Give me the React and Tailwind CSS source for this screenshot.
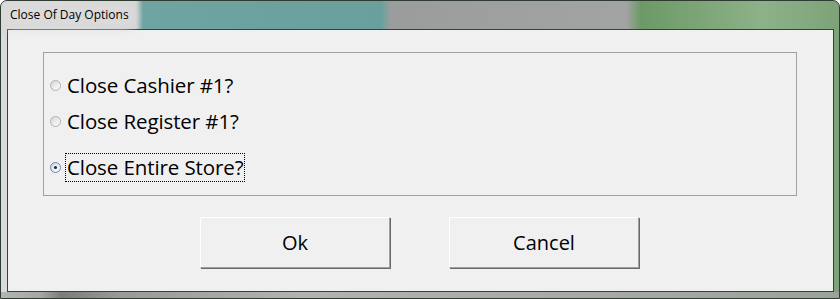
import React, { useState } from 'react';

const options = [
  { id: 'cashier', label: 'Close Cashier #1?' },
  { id: 'register', label: 'Close Register #1?' },
  { id: 'store', label: 'Close Entire Store?' },
];

function Radio({ checked }) {
  return (
    <span
      className={
        'flex h-[11px] w-[11px] shrink-0 items-center justify-center rounded-full border bg-[linear-gradient(135deg,#d6d6d6,#ffffff)] ' +
        (checked ? 'border-[#5f88b5]' : 'border-[#b0b0b0]')
      }
    >
      {checked && <span className="h-[3px] w-[3px] rounded-full bg-[#1a2a40]" />}
    </span>
  );
}

export default function App() {
  const [selected, setSelected] = useState('store');

  return (
    <div className="relative h-[299px] w-[840px] overflow-hidden rounded-t-[7px] border border-[#2f3a30] bg-[linear-gradient(90deg,#dadada_0px,#d4d4d4_135px,#6ea4a1_142px,#69a09d_380px,#9b9d9d_390px,#a2a4a4_625px,#6c9a66_640px,#8db189_760px,#7ea278_840px)] font-['Open_Sans',sans-serif]">
      {/* Title bar */}
      <div className="flex h-[28px] items-center pl-[8px] text-[12px] text-black">
        <span className="rounded-[6px] bg-[#dcdcdc]/70 px-[1px] shadow-[0_0_8px_6px_rgba(220,220,220,0.7)]">Close Of Day Options</span>
      </div>

      {/* Client area */}
      <div className="ml-[6px] flex h-[263px] w-[827px] flex-col border border-[#3b3f3b] bg-[#f0f0f0]">
        <div className="ml-[35px] mt-[22px] flex h-[144px] w-[754px] flex-col border border-[#a0a0a0] pl-[6px] pt-[18px]">
          {options.map((opt, i) => {
            const checked = selected === opt.id;
            return (
              <button
                key={opt.id}
                onClick={() => setSelected(opt.id)}
                className={
                  'flex h-[28px] items-center gap-[4px] text-left text-[20.5px] tracking-[-0.1px] text-black ' +
                  (i === 1 ? 'mt-[8px]' : i === 2 ? 'mt-[18px]' : '')
                }
              >
                <Radio checked={checked} />
                <span
                  className={
                    'px-[1px] leading-[27px] ' +
                    (checked ? 'border border-dotted border-black' : 'border border-transparent')
                  }
                >
                  {opt.label}
                </span>
              </button>
            );
          })}
        </div>

        <div className="mt-[21px] flex justify-center gap-[59px] pr-[2px]">
          <button className="h-[51px] w-[190px] border border-b-[#a0a0a0] border-l-white border-r-[#a0a0a0] border-t-white bg-[#f0f0f0] text-[20px] text-black shadow-[1px_1px_0_#696969]">
            Ok
          </button>
          <button className="h-[51px] w-[190px] border border-b-[#a0a0a0] border-l-white border-r-[#a0a0a0] border-t-white bg-[#f0f0f0] text-[20px] text-black shadow-[1px_1px_0_#696969]">
            Cancel
          </button>
        </div>
      </div>

      {/* Bottom frame */}
      <div className="h-[6px] bg-[linear-gradient(90deg,#b4b4b4_0px,#a6a6a6_40px,#7c7c7c_60px,#9a9a9a_120px,#b2b2b2_300px,#a8a8a8_600px,#9aa39a_840px)]" />
    </div>
  );
}
